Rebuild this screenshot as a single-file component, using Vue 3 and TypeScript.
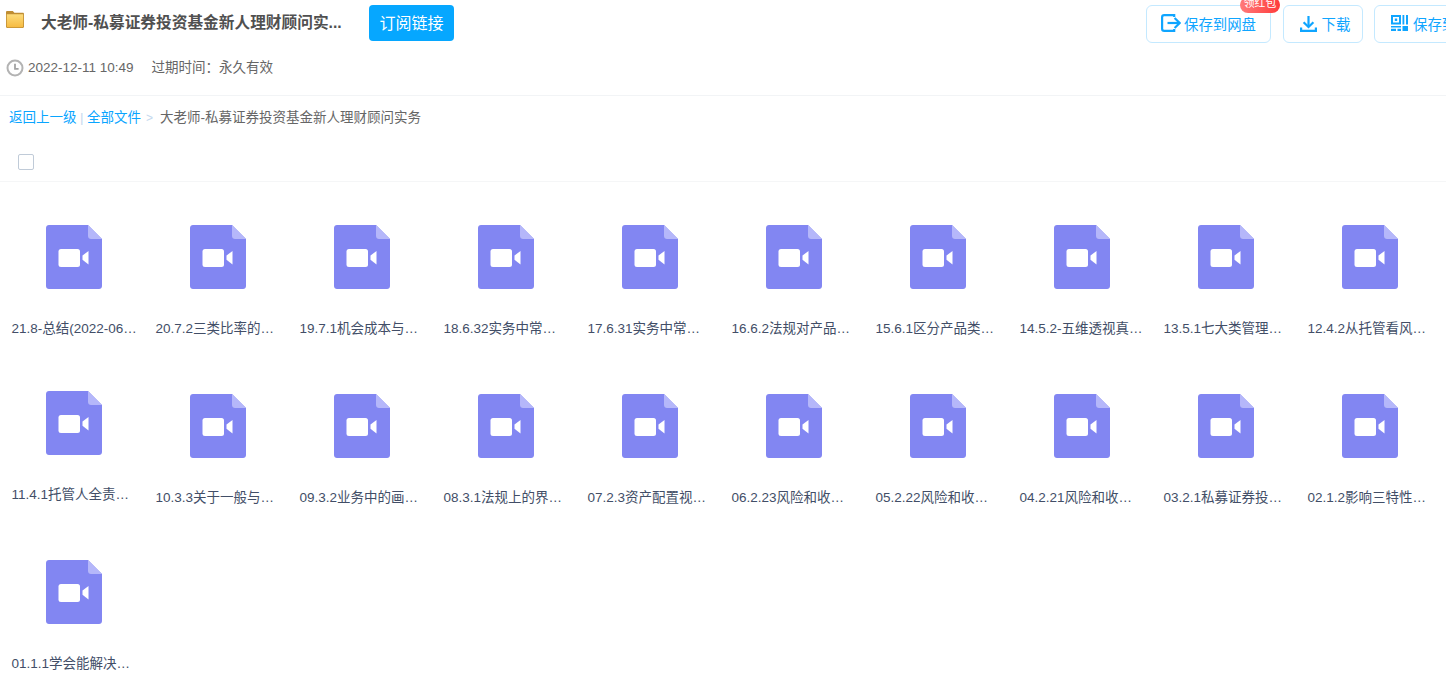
<script setup lang="ts">
const names: string[] = [
  '21.8-总结(2022-06…', '20.7.2三类比率的…', '19.7.1机会成本与…', '18.6.32实务中常…', '17.6.31实务中常…',
  '16.6.2法规对产品…', '15.6.1区分产品类…', '14.5.2-五维透视真…', '13.5.1七大类管理…', '12.4.2从托管看风…',
  '11.4.1托管人全责…', '10.3.3关于一般与…', '09.3.2业务中的画…', '08.3.1法规上的界…', '07.2.3资产配置视…',
  '06.2.23风险和收…', '05.2.22风险和收…', '04.2.21风险和收…', '03.2.1私募证券投…', '02.1.2影响三特性…',
  '01.1.1学会能解决…',
]
</script>

<template>
  <div class="page">
    <header class="head">
      <div class="title-row">
        <svg class="folder" width="18" height="17" viewBox="0 0 18 17">
          <defs>
            <linearGradient id="folder-fill" x1="0" y1="0" x2="0" y2="1">
              <stop offset="0" stop-color="#fddc7c" />
              <stop offset="1" stop-color="#f6bb41" />
            </linearGradient>
          </defs>
          <path d="M0 1.2C0 0.5 0.5 0 1.2 0H6.8L8.4 1.8H16.8C17.5 1.8 18 2.3 18 3V15.8C18 16.5 17.5 17 16.8 17H1.2C0.5 17 0 16.5 0 15.8Z" fill="#bf8d33" />
          <path d="M0.8 3.2H17.2V15.4C17.2 15.9 16.9 16.2 16.4 16.2H1.6C1.1 16.2 0.8 15.9 0.8 15.4Z" fill="url(#folder-fill)" />
        </svg>
        <h1 class="title">大老师-私募证券投资基金新人理财顾问实...</h1>
        <button class="subscribe">订阅链接</button>
        <div class="actions">
          <button class="action save">
            <span class="badge">领红包</span>
            <svg width="20" height="18" viewBox="0 0 20 18" fill="none" stroke="#0fa5ff" stroke-width="2.2">
              <path d="M13.2 3V1.2H3.2C2 1.2 1.1 2.1 1.1 3.3V14.7C1.1 15.9 2 16.8 3.2 16.8H13.2V15" />
              <path d="M6.5 9H18.4" />
              <path d="M13.6 4L18.6 9L13.6 14" />
            </svg>
            保存到网盘
          </button>
          <button class="action download">
            <svg width="17" height="16" viewBox="0 0 17 16" fill="none" stroke="#0fa5ff" stroke-width="2.2">
              <path d="M8.5 0V10.5" />
              <path d="M3.6 6.2L8.5 11L13.4 6.2" />
              <path d="M1.1 11.5V14.9H15.9V11.5" />
            </svg>
            下载
          </button>
          <button class="action qr">
            <svg width="17" height="16" viewBox="0 0 17 16" fill="#0fa5ff">
              <path d="M0 0H10V9.5H0ZM2 2V7.5H8V2Z" fill-rule="evenodd" />
              <path d="M3.8 3.4H6.2V6H3.8ZM11.5 0H13.3V9.5H11.5ZM15 0H17V9.5H15ZM0 11H10V12.6H0ZM0 13.8H5V16H0ZM6.5 13.8H10V16H6.5ZM11.5 11H17V16H11.5Z" />
            </svg>
            保存到手机
          </button>
        </div>
      </div>
      <div class="meta">
        <svg width="18" height="18" viewBox="0 0 18 18" fill="none" stroke="#b3b3b3">
          <circle cx="9" cy="9" r="7.5" stroke-width="2" />
          <path d="M9 4.8V9.8H12.6" stroke="#a3a3a3" stroke-width="1.8" />
        </svg>
        <span class="date">2022-12-11 10:49</span>
        <span>过期时间：永久有效</span>
      </div>
    </header>

    <nav class="crumbs">
      <a>返回上一级</a>
      <i class="pipe">|</i>
      <a>全部文件</a>
      <i class="gt">&gt;</i>
      <span>大老师-私募证券投资基金新人理财顾问实务</span>
    </nav>

    <div class="select-bar">
      <span class="checkbox"></span>
    </div>

    <ul class="grid">
      <li
        v-for="(name, i) in names"
        :key="name"
        class="item"
        :class="{ lowered: i > 10 && i < 20 }"
      >
        <svg class="file" width="56" height="64" viewBox="0 0 56 64">
          <path d="M3 0H42L56 14V61C56 62.7 54.7 64 53 64H3C1.3 64 0 62.7 0 61V3C0 1.3 1.3 0 3 0Z" fill="#8286f2" />
          <path d="M42 0L56 14H45C43.3 14 42 12.7 42 11Z" fill="#b5b7fa" />
          <rect x="12.5" y="24" width="21.5" height="18" rx="2.5" fill="#fff" />
          <path d="M42.5 26V39.5L36.5 34.8V30.6Z" fill="#fff" />
        </svg>
        <span class="name">{{ name }}</span>
      </li>
    </ul>
  </div>
</template>

<style>
html,
body {
  margin: 0;
  background: #fff;
  overflow: hidden;
}
</style>

<style scoped>
.page {
  width: 1446px;
  height: 684px;
  overflow: hidden;
  font-family: "Liberation Sans", "Noto Sans CJK SC", sans-serif;
  font-size: 13.5px;
  color: #666;
}

.head {
  height: 95px;
  padding-left: 6px;
  border-bottom: 1px solid #f2f4f6;
  box-sizing: content-box;
}

.title-row {
  display: flex;
  align-items: flex-start;
  height: 48px;
}

.folder {
  flex: none;
  margin-top: 11px;
}

.title {
  flex: none;
  width: 305px;
  margin: 13px 0 0 17px;
  font-size: 15.7px;
  line-height: 20px;
  font-weight: 700;
  color: #505050;
  white-space: nowrap;
}

.subscribe {
  flex: none;
  width: 85px;
  height: 36px;
  margin: 5px 0 0 23px;
  padding: 0 0 3px;
  border: 0;
  border-radius: 4px;
  background: #06a7ff;
  color: #fff;
  font: inherit;
  font-size: 16px;
}

.actions {
  display: flex;
  flex: none;
  gap: 11.5px;
  margin: 5px 0 0 692px;
}

.action {
  position: relative;
  display: flex;
  flex: none;
  align-items: center;
  height: 38px;
  padding: 0 0 2px 16px;
  gap: 5px;
  border: 1px solid #c4e9ff;
  border-radius: 6px;
  background: #fff;
  color: #0fa5ff;
  font: inherit;
  font-size: 14.4px;
  box-sizing: border-box;
}

.save {
  width: 125px;
  gap: 3px;
  padding-left: 14px;
}

.download {
  width: 80px;
}

.download svg {
  margin-top: 2px;
}

.qr {
  width: 130px;
}

.badge {
  position: absolute;
  top: -9px;
  right: -10px;
  width: 40px;
  height: 16px;
  border-radius: 8px;
  background: linear-gradient(to right, #ff7a7a, #ff3b3b);
  color: #fff;
  font-size: 10.8px;
  line-height: 13px;
  text-align: center;
}

.meta {
  display: flex;
  align-items: center;
  margin-top: 11px;
  height: 18px;
  line-height: 16px;
}

.date {
  margin: 0 18px 0 4px;
}

.crumbs {
  display: flex;
  align-items: center;
  height: 20px;
  margin-top: 12px;
  padding-left: 9px;
  line-height: 18px;
}

.crumbs a {
  color: #09a5ff;
}

.pipe {
  margin: 0 3.5px;
  font-style: normal;
  color: #c4d8ee;
}

.gt {
  margin: 0 7px 0 5px;
  font-style: normal;
  font-size: 12px;
  color: #c4d8ee;
}

.select-bar {
  height: 54px;
  padding: 26px 0 0 18px;
  border-bottom: 1px solid #f5f6f7;
  box-sizing: border-box;
}

.checkbox {
  display: block;
  width: 14px;
  height: 14px;
  border: 1px solid #c0cbd8;
  border-radius: 2px;
}

.grid {
  display: grid;
  grid-template-columns: repeat(10, 144px);
  align-items: start;
  margin: 0;
  padding: 43px 0 0 2px;
  list-style: none;
}

.item {
  display: flex;
  flex-direction: column;
  align-items: center;
  height: 166px;
}

.lowered {
  margin-top: 3px;
}

.file {
  flex: none;
}

.name {
  align-self: flex-start;
  margin: 32px 0 0 9.5px;
  line-height: 16px;
  white-space: nowrap;
  color: #424e67;
}
</style>
